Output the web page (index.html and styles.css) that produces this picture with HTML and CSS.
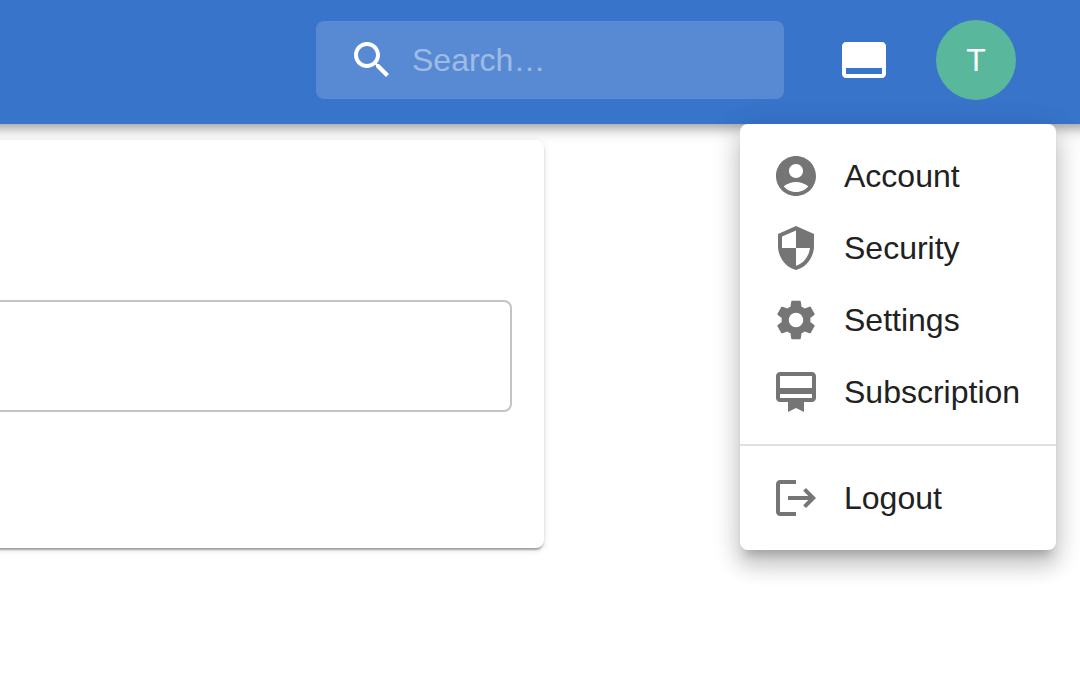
FILE: index.html
```
<!DOCTYPE html>
<html lang="en">
<head>
<meta charset="utf-8">
<meta name="viewport" content="width=device-width, initial-scale=1">
<title>Account menu</title>
<link rel="stylesheet" href="styles.css">
</head>
<body>
<header class="app-bar">
  <label class="search">
    <svg class="icon" viewBox="0 0 24 24" aria-hidden="true"><path d="M15.5 14h-.79l-.28-.27C15.41 12.59 16 11.11 16 9.5 16 5.91 13.09 3 9.5 3S3 5.91 3 9.5 5.91 16 9.5 16c1.61 0 3.09-.59 4.23-1.57l.27.28v.79l5 4.99L20.49 19l-4.99-5zm-6 0C7.01 14 5 11.99 5 9.5S7.01 5 9.5 5 14 7.01 14 9.5 11.99 14 9.5 14z"/></svg>
    <input class="search-input" type="text" placeholder="Search…" aria-label="Search">
  </label>
  <button class="icon-button" type="button" aria-label="Toggle panel">
    <svg class="icon" viewBox="0 0 24 24" aria-hidden="true"><path d="M21 3H3c-1.1 0-2 .9-2 2v14c0 1.1.9 2 2 2h18c1.1 0 2-.9 2-2V5c0-1.1-.9-2-2-2zm0 16H3v-3h18v3z"/></svg>
  </button>
  <div class="profile">
    <button class="avatar" type="button" aria-haspopup="menu" aria-expanded="true">T</button>
    <div class="menu" role="menu">
      <button class="menu-item" type="button" role="menuitem">
        <svg class="icon" viewBox="0 0 24 24" aria-hidden="true"><path d="M12 2C6.48 2 2 6.48 2 12s4.48 10 10 10 10-4.48 10-10S17.52 2 12 2zm0 4c1.93 0 3.5 1.57 3.5 3.5S13.93 13 12 13s-3.5-1.57-3.5-3.5S10.07 6 12 6zm0 14c-2.03 0-4.43-.82-6.14-2.88C7.55 15.8 9.68 15 12 15s4.45.8 6.14 2.12C16.43 19.18 14.03 20 12 20z"/></svg>
        Account
      </button>
      <button class="menu-item" type="button" role="menuitem">
        <svg class="icon" viewBox="0 0 24 24" aria-hidden="true"><path d="M12 1L3 5v6c0 5.55 3.84 10.74 9 12 5.16-1.26 9-6.45 9-12V5l-9-4zm0 10.99h7c-.53 4.12-3.28 7.79-7 8.94V12H5V6.3l7-3.11v8.8z"/></svg>
        Security
      </button>
      <button class="menu-item" type="button" role="menuitem">
        <svg class="icon" viewBox="0 0 24 24" aria-hidden="true"><path d="M19.14 12.94c.04-.3.06-.61.06-.94 0-.32-.02-.64-.07-.94l2.03-1.58c.18-.14.23-.41.12-.61l-1.92-3.32c-.12-.22-.37-.29-.59-.22l-2.39.96c-.5-.38-1.03-.7-1.62-.94l-.36-2.54c-.04-.24-.24-.41-.48-.41h-3.84c-.24 0-.43.17-.47.41l-.36 2.54c-.59.24-1.13.57-1.62.94l-2.39-.96c-.22-.08-.47 0-.59.22L2.74 8.87c-.12.21-.08.47.12.61l2.03 1.58c-.05.3-.09.63-.09.94s.02.64.07.94l-2.03 1.58c-.18.14-.23.41-.12.61l1.92 3.32c.12.22.37.29.59.22l2.39-.96c.5.38 1.03.7 1.62.94l.36 2.54c.05.24.24.41.48.41h3.84c.24 0 .44-.17.47-.41l.36-2.54c.59-.24 1.13-.56 1.62-.94l2.39.96c.22.08.47 0 .59-.22l1.92-3.32c.12-.22.07-.47-.12-.61l-2.01-1.58zM12 15.6c-1.98 0-3.6-1.62-3.6-3.6s1.62-3.6 3.6-3.6 3.6 1.62 3.6 3.6-1.62 3.6-3.6 3.6z"/></svg>
        Settings
      </button>
      <button class="menu-item" type="button" role="menuitem">
        <svg class="icon" viewBox="0 0 24 24" aria-hidden="true"><path d="M20 2H4c-1.11 0-2 .89-2 2v11c0 1.11.89 2 2 2h4v5l4-2 4 2v-5h4c1.11 0 2-.89 2-2V4c0-1.11-.89-2-2-2zm0 13H4v-2h16v2zm0-5H4V4h16v6z"/></svg>
        Subscription
      </button>
      <hr class="divider">
      <button class="menu-item" type="button" role="menuitem">
        <svg class="icon" viewBox="0 0 24 24" aria-hidden="true"><path d="M17 7l-1.41 1.41L18.17 11H8v2h10.17l-2.58 2.58L17 17l5-5zM4 5h8V3H4c-1.1 0-2 .9-2 2v14c0 1.1.9 2 2 2h8v-2H4V5z"/></svg>
        Logout
      </button>
    </div>
  </div>
</header>
<main class="content">
  <section class="card">
    <input class="field" type="text" aria-label="Value">
  </section>
</main>
</body>
</html>
```
FILE: styles.css
```
* {
  box-sizing: border-box;
}

body {
  margin: 0;
  min-height: 100vh;
  overflow-x: hidden;
  background: #fff;
  color: #212121;
  font-family: "Liberation Sans", Arial, sans-serif;
  font-size: 32px;
  line-height: 48px;
}

button,
input {
  margin: 0;
  padding: 0;
  border: 0;
  background: none;
  color: inherit;
  font: inherit;
}

.icon {
  display: block;
  flex: none;
  width: 48px;
  height: 48px;
  fill: currentColor;
}

/* Bleeds past both window edges so the shadow stays even. */
.app-bar {
  display: flex;
  align-items: center;
  justify-content: flex-end;
  margin: 0 -24px;
  padding: 20px 88px 24px;
  background: #3774ca;
  color: #fff;
  box-shadow:
    0 4px 8px -2px rgba(0, 0, 0, 0.2),
    0 8px 10px 0 rgba(0, 0, 0, 0.14),
    0 2px 20px 0 rgba(0, 0, 0, 0.12);
}

.search {
  display: flex;
  align-items: center;
  gap: 16px;
  width: 468px;
  height: 78px;
  margin-right: 56px;
  padding: 0 32px;
  border-radius: 8px;
  background: rgba(255, 255, 255, 0.16);
}

.search-input {
  flex: 1;
  min-width: 0;
  height: 48px;
  outline: 0;
}

.search-input::placeholder {
  color: #fff;
  opacity: 0.42;
}

.icon-button {
  margin-right: 48px;
}

.profile {
  position: relative;
}

.avatar {
  display: block;
  width: 80px;
  height: 80px;
  border-radius: 50%;
  background: #59b89c;
  text-align: center;
}

.menu {
  position: absolute;
  top: 104px;
  right: -40px;
  z-index: 1;
  min-width: 316px;
  padding: 16px 0;
  border-radius: 8px;
  background: #fff;
  color: #212121;
  box-shadow:
    0 10px 10px -6px rgba(0, 0, 0, 0.2),
    0 16px 20px 2px rgba(0, 0, 0, 0.14),
    0 6px 28px 4px rgba(0, 0, 0, 0.12);
}

.menu-item {
  display: flex;
  align-items: center;
  gap: 24px;
  width: 100%;
  padding: 12px 32px;
  text-align: left;
}

.menu-item .icon {
  color: #757575;
}

.divider {
  height: 2px;
  margin: 16px 0;
  border: 0;
  background: #e0e0e0;
}

.content {
  padding: 16px 536px 32px 0;
}

.card {
  margin-left: -24px;
  padding: 160px 32px 136px 0;
  border-radius: 8px;
  background: #fff;
  box-shadow:
    0 4px 2px -2px rgba(0, 0, 0, 0.2),
    0 2px 2px 0 rgba(0, 0, 0, 0.14),
    0 2px 6px 0 rgba(0, 0, 0, 0.12);
}

.field {
  display: block;
  width: 100%;
  height: 112px;
  padding: 0 28px;
  border: 2px solid #c4c4c4;
  border-radius: 8px;
}
```
